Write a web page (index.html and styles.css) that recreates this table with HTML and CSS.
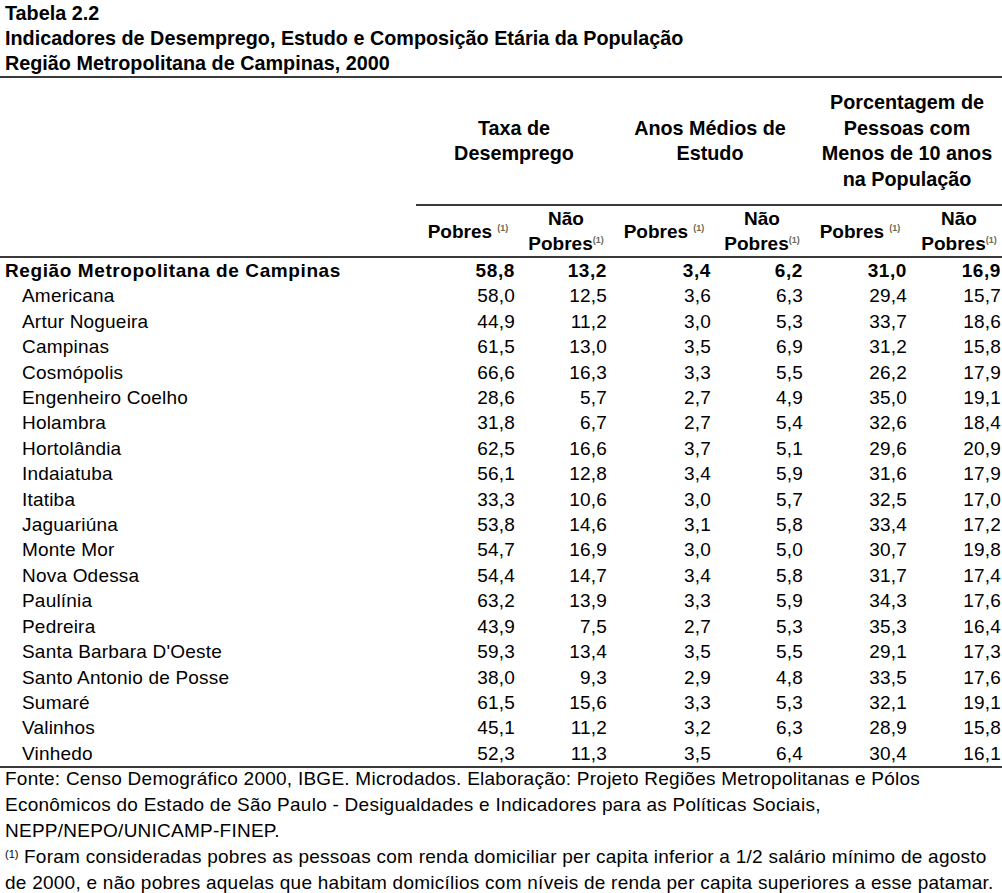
FILE: index.html
```html
<!DOCTYPE html>
<html lang="pt">
<head>
<meta charset="utf-8">
<title>Tabela 2.2</title>
<link rel="stylesheet" href="styles.css">
</head>
<body>
<div class="page">
  <div class="title">
    <div>Tabela 2.2</div>
    <div>Indicadores de Desemprego, Estudo e Composição Etária da População</div>
    <div>Região Metropolitana de Campinas, 2000</div>
  </div>
  <table class="data">
    <colgroup>
      <col class="c-label">
      <col class="c-a"><col class="c-b">
      <col class="c-a"><col class="c-b">
      <col class="c-a"><col class="c-c">
    </colgroup>
    <thead>
      <tr class="group-row">
        <th class="blank"></th>
        <th colspan="2" class="group">Taxa de<br>Desemprego</th>
        <th colspan="2" class="group">Anos Médios de<br>Estudo</th>
        <th colspan="2" class="group">Porcentagem de<br>Pessoas com<br>Menos de 10 anos<br>na População</th>
      </tr>
      <tr class="sub-row">
        <th class="blank"></th>
        <th class="sub">Pobres <sup>(1)</sup></th>
        <th class="sub">Não<br>Pobres<sup>(1)</sup></th>
        <th class="sub">Pobres <sup>(1)</sup></th>
        <th class="sub">Não<br>Pobres<sup>(1)</sup></th>
        <th class="sub">Pobres <sup>(1)</sup></th>
        <th class="sub">Não<br>Pobres<sup>(1)</sup></th>
      </tr>
    </thead>
    <tbody>
      <tr class="total"><td class="name">Região Metropolitana de Campinas</td><td>58,8</td><td>13,2</td><td>3,4</td><td>6,2</td><td>31,0</td><td>16,9</td></tr>
      <tr><td class="name city">Americana</td><td>58,0</td><td>12,5</td><td>3,6</td><td>6,3</td><td>29,4</td><td>15,7</td></tr>
      <tr><td class="name city">Artur Nogueira</td><td>44,9</td><td>11,2</td><td>3,0</td><td>5,3</td><td>33,7</td><td>18,6</td></tr>
      <tr><td class="name city">Campinas</td><td>61,5</td><td>13,0</td><td>3,5</td><td>6,9</td><td>31,2</td><td>15,8</td></tr>
      <tr><td class="name city">Cosmópolis</td><td>66,6</td><td>16,3</td><td>3,3</td><td>5,5</td><td>26,2</td><td>17,9</td></tr>
      <tr><td class="name city">Engenheiro Coelho</td><td>28,6</td><td>5,7</td><td>2,7</td><td>4,9</td><td>35,0</td><td>19,1</td></tr>
      <tr><td class="name city">Holambra</td><td>31,8</td><td>6,7</td><td>2,7</td><td>5,4</td><td>32,6</td><td>18,4</td></tr>
      <tr><td class="name city">Hortolândia</td><td>62,5</td><td>16,6</td><td>3,7</td><td>5,1</td><td>29,6</td><td>20,9</td></tr>
      <tr><td class="name city">Indaiatuba</td><td>56,1</td><td>12,8</td><td>3,4</td><td>5,9</td><td>31,6</td><td>17,9</td></tr>
      <tr><td class="name city">Itatiba</td><td>33,3</td><td>10,6</td><td>3,0</td><td>5,7</td><td>32,5</td><td>17,0</td></tr>
      <tr><td class="name city">Jaguariúna</td><td>53,8</td><td>14,6</td><td>3,1</td><td>5,8</td><td>33,4</td><td>17,2</td></tr>
      <tr><td class="name city">Monte Mor</td><td>54,7</td><td>16,9</td><td>3,0</td><td>5,0</td><td>30,7</td><td>19,8</td></tr>
      <tr><td class="name city">Nova Odessa</td><td>54,4</td><td>14,7</td><td>3,4</td><td>5,8</td><td>31,7</td><td>17,4</td></tr>
      <tr><td class="name city">Paulínia</td><td>63,2</td><td>13,9</td><td>3,3</td><td>5,9</td><td>34,3</td><td>17,6</td></tr>
      <tr><td class="name city">Pedreira</td><td>43,9</td><td>7,5</td><td>2,7</td><td>5,3</td><td>35,3</td><td>16,4</td></tr>
      <tr><td class="name city">Santa Barbara D'Oeste</td><td>59,3</td><td>13,4</td><td>3,5</td><td>5,5</td><td>29,1</td><td>17,3</td></tr>
      <tr><td class="name city">Santo Antonio de Posse</td><td>38,0</td><td>9,3</td><td>2,9</td><td>4,8</td><td>33,5</td><td>17,6</td></tr>
      <tr><td class="name city">Sumaré</td><td>61,5</td><td>15,6</td><td>3,3</td><td>5,3</td><td>32,1</td><td>19,1</td></tr>
      <tr><td class="name city">Valinhos</td><td>45,1</td><td>11,2</td><td>3,2</td><td>6,3</td><td>28,9</td><td>15,8</td></tr>
      <tr><td class="name city">Vinhedo</td><td>52,3</td><td>11,3</td><td>3,5</td><td>6,4</td><td>30,4</td><td>16,1</td></tr>
    </tbody>
  </table>
  <div class="notes">
    <p>Fonte: Censo Demográfico 2000, IBGE. Microdados. Elaboração: Projeto Regiões Metropolitanas e Pólos<br>Econômicos do Estado de São Paulo - Desigualdades e Indicadores para as Políticas Sociais,<br>NEPP/NEPO/UNICAMP-FINEP.</p>
    <p><sup>(1)</sup> Foram consideradas pobres as pessoas com renda domiciliar per capita inferior a 1/2 salário mínimo de agosto de 2000, e não pobres aquelas que habitam domicílios com níveis de renda per capita superiores a esse patamar.</p>
  </div>
</div>
</body>
</html>
```

FILE: styles.css
```css
html, body {
  margin: 0;
  padding: 0;
  background: #ffffff;
}

.page {
  width: 1002px;
  font-family: "Liberation Sans", Arial, sans-serif;
  color: #000000;
}

.title {
  padding: 1px 0 0 5px;
  font-size: 19.8px;
  font-weight: bold;
  line-height: 25px;
  border-bottom: 2px solid #3a3a3a;
}

.data {
  width: 1002px;
  border-collapse: collapse;
  table-layout: fixed;
  font-size: 19px;
}

.c-label { width: 416px; }
.c-a { width: 104px; }
.c-b { width: 92px; }
.c-c { width: 94px; }

.data th {
  font-weight: bold;
  padding: 0;
  text-align: center;
  line-height: 25.5px;
  white-space: nowrap;
}

.group-row th {
  height: 126px;
  vertical-align: middle;
  font-size: 19.8px;
}

.group-row th.group {
  border-bottom: 2px solid #3a3a3a;
}

.sub-row th {
  height: 49px;
  line-height: 25px;
  border-bottom: 2px solid #3a3a3a;
}

.data sup {
  font-size: 9px;
  line-height: 0;
  vertical-align: 7px;
  color: #6b6b55;
}

.data td {
  padding: 0 5px 0 0;
  height: 25.4px;
  line-height: 25.4px;
  text-align: right;
  white-space: nowrap;
  letter-spacing: 0.2px;
}

.data td.name {
  text-align: left;
  padding-left: 5px;
}

.data td.city {
  padding-left: 22px;
}

.data tr.total td {
  font-weight: bold;
  letter-spacing: 0.6px;
}

.data tbody tr:last-child td {
  border-bottom: 2px solid #3a3a3a;
}

.notes {
  padding: 0 0 0 5px;
  font-size: 19px;
  line-height: 26px;
  letter-spacing: 0.25px;
  margin-top: -2px;
}

.notes p {
  margin: 0;
}

.notes sup {
  font-size: 11px;
  line-height: 0;
  vertical-align: 5px;
  letter-spacing: 0;
}
```
